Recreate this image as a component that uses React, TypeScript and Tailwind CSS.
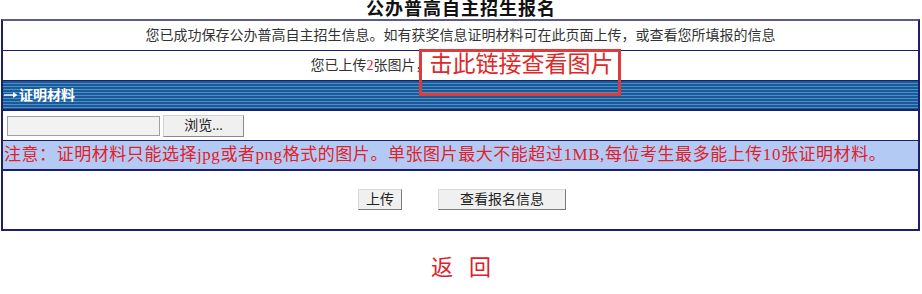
import React from 'react';

const serif = 'font-["Liberation_Serif","Noto_Sans_CJK_SC",serif]';

export default function App() {
  return (
    <div className={`relative h-[294px] w-[922px] overflow-hidden bg-white ${serif}`}>
      <h1 className="h-[19px] text-center text-[18px] font-bold leading-[19px] tracking-[1px] text-[#111]">
        公办普高自主招生报名
      </h1>

      <div className="ml-px w-[919px] border-2 border-[#1e1e6e] border-t-[#5c5c8c]">
        {/* intro */}
        <div className="flex h-[30px] items-center justify-center border-b border-[#1e1e6e] text-[14px] text-[#333]">
          您已成功保存公办普高自主招生信息。如有获奖信息证明材料可在此页面上传，或查看您所填报的信息
        </div>

        {/* uploaded */}
        <div className="flex h-[30px] items-center justify-center border-b border-[#1e1e6e] pl-[3px] text-[14px] text-[#333]">
          <span>
            您已上传<span className="text-[#e02020]">2</span>张图片，
          </span>
          <a className="-mt-[2px] text-[23px] leading-none text-[#e02828]">击此链接查看图片</a>
        </div>

        {/* header bar */}
        <div className="flex h-[30px] items-center border-b-2 border-[#1e1e6e] bg-[repeating-linear-gradient(to_bottom,#1b5a98_0px,#1b5a98_2px,#4a90c8_2px,#4a90c8_3px)] pl-[1px] text-[14px] font-bold text-white">
          <svg width="14" height="8" viewBox="0 0 14 8" className="mr-[1px]">
            <line x1="0" y1="4" x2="10" y2="4" stroke="white" strokeWidth="1.4" />
            <path d="M9 1 L13.5 4 L9 7 Z" fill="white" />
          </svg>
          证明材料
        </div>

        {/* file input */}
        <div className="flex h-[30px] items-center gap-[3px] border-b border-[#1e1e6e] pl-[4px]">
          <div className="h-[20px] w-[153px] border border-[#a0a0a0] bg-[#f2f2f2]" />
          <button className="h-[22px] w-[81px] border border-[#8a8a8a] border-t-[#d0d0d0] border-l-[#d0d0d0] bg-[#f0f0f0] text-[14px] leading-[20px] text-[#222]">
            浏览...
          </button>
        </div>

        {/* note */}
        <div className="flex h-[30px] items-center border-b-2 border-[#1e1e6e] bg-[#b3cbf4] pl-[1px] text-[17px] tracking-[0.55px] text-[#e0202a]">
          注意：证明材料只能选择jpg或者png格式的图片。单张图片最大不能超过1MB,每位考生最多能上传10张证明材料。
        </div>

        {/* actions */}
        <div className="flex h-[58px] items-center justify-center gap-[36px] pb-[2px] pl-[3px]">
          <button className="h-[21px] w-[44px] border border-[#7a7a7a] border-t-[#d8d8d8] border-l-[#d8d8d8] bg-[#f0f0f0] text-[14px] leading-[19px] text-[#222]">
            上传
          </button>
          <button className="h-[21px] w-[128px] border border-[#7a7a7a] border-t-[#d8d8d8] border-l-[#d8d8d8] bg-[#f0f0f0] text-[14px] leading-[19px] text-[#222]">
            查看报名信息
          </button>
        </div>
      </div>

      <div className="mt-[24px] flex justify-center gap-[16px] text-[22px] leading-[26px] text-[#e0202a]">
        <span>返</span>
        <span>回</span>
      </div>

      {/* red annotation box */}
      <div className="absolute left-[419px] top-[49px] h-[47px] w-[202px] border-[3px] border-[#e03a3a]" />
    </div>
  );
}
